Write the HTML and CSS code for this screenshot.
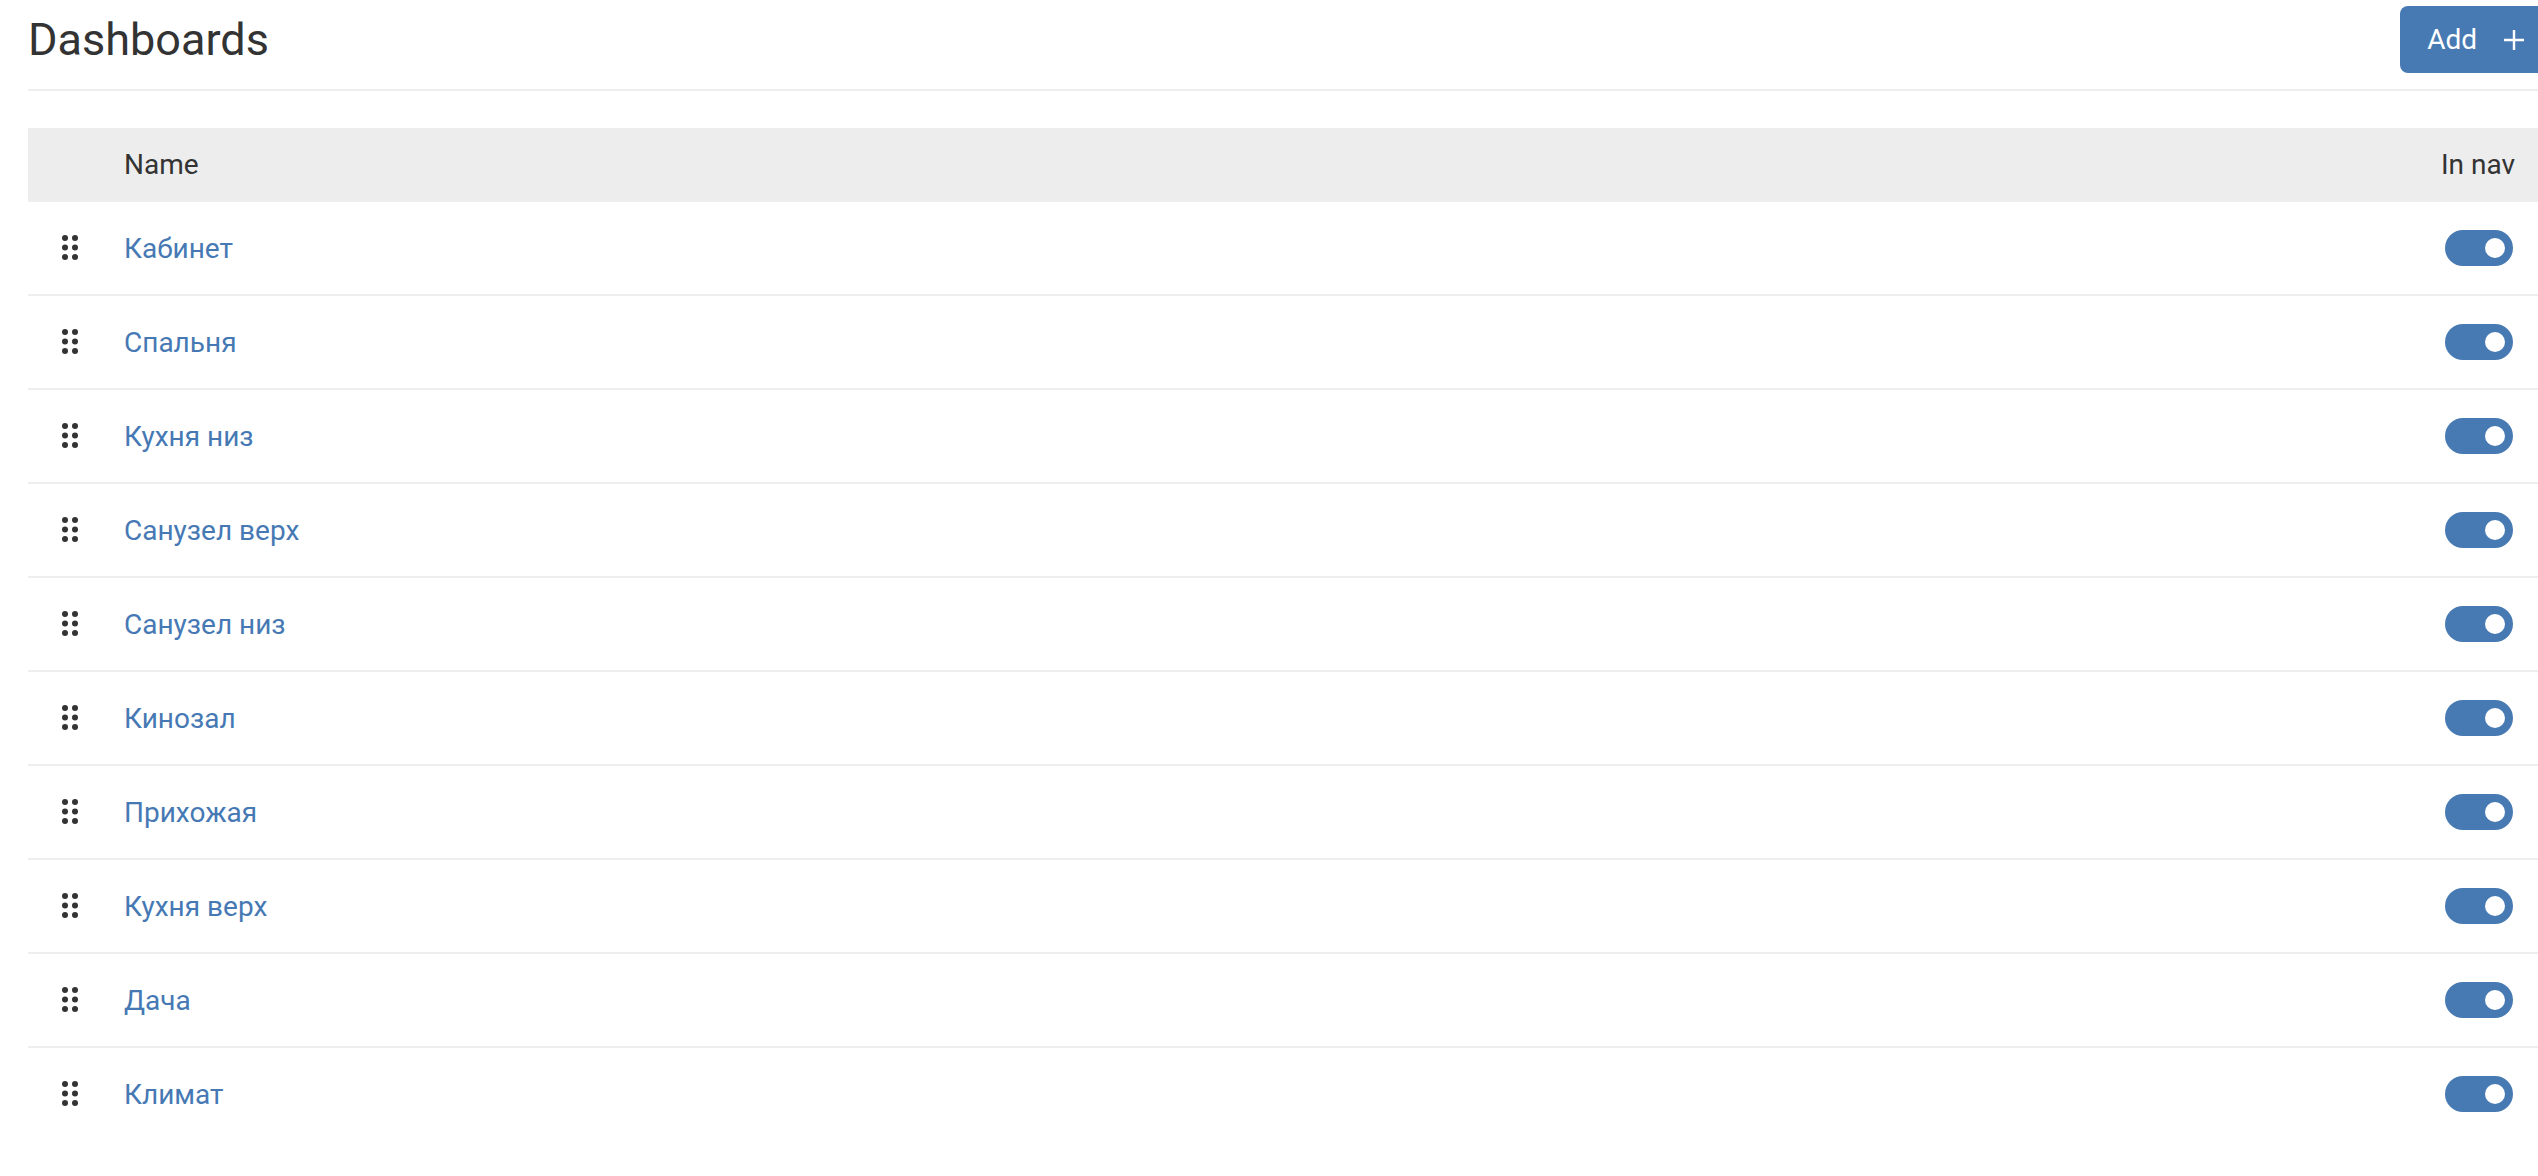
FILE: index.html
```html
<!DOCTYPE html>
<html lang="ru">
<head>
<meta charset="utf-8">
<title>Dashboards</title>
<link rel="stylesheet" href="styles.css">
</head>
<body>
<div class="page">
  <header class="top">
    <h1 class="title">Dashboards</h1>
    <button class="add-btn" type="button">
      <span>Add</span>
      <svg class="plus" width="20" height="20" viewBox="0 0 20 20"><path d="M10 0V20M0 10H20" stroke="#fff" stroke-width="2.4" fill="none"/></svg>
    </button>
  </header>

  <div class="table">
    <div class="row head">
      <div class="cell drag"></div>
      <div class="cell name">Name</div>
      <div class="cell nav">In nav</div>
    </div>

    <div class="row"><div class="cell drag"><svg class="grip" width="16" height="26" viewBox="0 0 16 26"><circle cx="3" cy="3" r="3"/><circle cx="13" cy="3" r="3"/><circle cx="3" cy="12.5" r="3"/><circle cx="13" cy="12.5" r="3"/><circle cx="3" cy="22" r="3"/><circle cx="13" cy="22" r="3"/></svg></div><div class="cell name"><a href="#">Кабинет</a></div><div class="cell nav"><span class="toggle"><span class="knob"></span></span></div></div>
    <div class="row"><div class="cell drag"><svg class="grip" width="16" height="26" viewBox="0 0 16 26"><circle cx="3" cy="3" r="3"/><circle cx="13" cy="3" r="3"/><circle cx="3" cy="12.5" r="3"/><circle cx="13" cy="12.5" r="3"/><circle cx="3" cy="22" r="3"/><circle cx="13" cy="22" r="3"/></svg></div><div class="cell name"><a href="#">Спальня</a></div><div class="cell nav"><span class="toggle"><span class="knob"></span></span></div></div>
    <div class="row"><div class="cell drag"><svg class="grip" width="16" height="26" viewBox="0 0 16 26"><circle cx="3" cy="3" r="3"/><circle cx="13" cy="3" r="3"/><circle cx="3" cy="12.5" r="3"/><circle cx="13" cy="12.5" r="3"/><circle cx="3" cy="22" r="3"/><circle cx="13" cy="22" r="3"/></svg></div><div class="cell name"><a href="#">Кухня низ</a></div><div class="cell nav"><span class="toggle"><span class="knob"></span></span></div></div>
    <div class="row"><div class="cell drag"><svg class="grip" width="16" height="26" viewBox="0 0 16 26"><circle cx="3" cy="3" r="3"/><circle cx="13" cy="3" r="3"/><circle cx="3" cy="12.5" r="3"/><circle cx="13" cy="12.5" r="3"/><circle cx="3" cy="22" r="3"/><circle cx="13" cy="22" r="3"/></svg></div><div class="cell name"><a href="#">Санузел верх</a></div><div class="cell nav"><span class="toggle"><span class="knob"></span></span></div></div>
    <div class="row"><div class="cell drag"><svg class="grip" width="16" height="26" viewBox="0 0 16 26"><circle cx="3" cy="3" r="3"/><circle cx="13" cy="3" r="3"/><circle cx="3" cy="12.5" r="3"/><circle cx="13" cy="12.5" r="3"/><circle cx="3" cy="22" r="3"/><circle cx="13" cy="22" r="3"/></svg></div><div class="cell name"><a href="#">Санузел низ</a></div><div class="cell nav"><span class="toggle"><span class="knob"></span></span></div></div>
    <div class="row"><div class="cell drag"><svg class="grip" width="16" height="26" viewBox="0 0 16 26"><circle cx="3" cy="3" r="3"/><circle cx="13" cy="3" r="3"/><circle cx="3" cy="12.5" r="3"/><circle cx="13" cy="12.5" r="3"/><circle cx="3" cy="22" r="3"/><circle cx="13" cy="22" r="3"/></svg></div><div class="cell name"><a href="#">Кинозал</a></div><div class="cell nav"><span class="toggle"><span class="knob"></span></span></div></div>
    <div class="row"><div class="cell drag"><svg class="grip" width="16" height="26" viewBox="0 0 16 26"><circle cx="3" cy="3" r="3"/><circle cx="13" cy="3" r="3"/><circle cx="3" cy="12.5" r="3"/><circle cx="13" cy="12.5" r="3"/><circle cx="3" cy="22" r="3"/><circle cx="13" cy="22" r="3"/></svg></div><div class="cell name"><a href="#">Прихожая</a></div><div class="cell nav"><span class="toggle"><span class="knob"></span></span></div></div>
    <div class="row"><div class="cell drag"><svg class="grip" width="16" height="26" viewBox="0 0 16 26"><circle cx="3" cy="3" r="3"/><circle cx="13" cy="3" r="3"/><circle cx="3" cy="12.5" r="3"/><circle cx="13" cy="12.5" r="3"/><circle cx="3" cy="22" r="3"/><circle cx="13" cy="22" r="3"/></svg></div><div class="cell name"><a href="#">Кухня верх</a></div><div class="cell nav"><span class="toggle"><span class="knob"></span></span></div></div>
    <div class="row"><div class="cell drag"><svg class="grip" width="16" height="26" viewBox="0 0 16 26"><circle cx="3" cy="3" r="3"/><circle cx="13" cy="3" r="3"/><circle cx="3" cy="12.5" r="3"/><circle cx="13" cy="12.5" r="3"/><circle cx="3" cy="22" r="3"/><circle cx="13" cy="22" r="3"/></svg></div><div class="cell name"><a href="#">Дача</a></div><div class="cell nav"><span class="toggle"><span class="knob"></span></span></div></div>
    <div class="row"><div class="cell drag"><svg class="grip" width="16" height="26" viewBox="0 0 16 26"><circle cx="3" cy="3" r="3"/><circle cx="13" cy="3" r="3"/><circle cx="3" cy="12.5" r="3"/><circle cx="13" cy="12.5" r="3"/><circle cx="3" cy="22" r="3"/><circle cx="13" cy="22" r="3"/></svg></div><div class="cell name"><a href="#">Климат</a></div><div class="cell nav"><span class="toggle"><span class="knob"></span></span></div></div>
  </div>
</div>
</body>
</html>
```

FILE: styles.css
```css
html {
  overflow: hidden;
}
body {
  margin: 0;
  background: #fff;
  font-family: Roboto, "Noto Sans", sans-serif;
  color: #333;
}
.page {
  width: 2523px;
  padding-left: 28px;
}
.top {
  display: flex;
  justify-content: space-between;
  align-items: center;
  padding-top: 6px;
  padding-bottom: 16px;
  border-bottom: 2px solid #eeeeee;
}
.title {
  margin: 0;
  font-size: 45px;
  font-weight: 400;
  line-height: 1;
  color: #333;
}
.add-btn {
  display: flex;
  align-items: center;
  gap: 27px;
  height: 67px;
  padding: 0 27px;
  border: 0;
  border-radius: 8px;
  background: #477ab3;
  color: #fff;
  font-family: Roboto, sans-serif;
  font-size: 28px;
  line-height: 1;
}
.plus {
  display: block;
}
.table {
  margin-top: 37px;
}
.row {
  display: grid;
  grid-template-columns: 96px 1fr auto;
  align-items: center;
  height: 92px;
  border-top: 2px solid #eeeeee;
  font-size: 28px;
}
.row.head {
  height: 72px;
  border-top: 0;
  background: #ededed;
  color: #333;
}
.cell.drag {
  padding-left: 34px;
  display: flex;
  align-items: center;
}
.grip {
  display: block;
  fill: #333;
}
.cell.name a {
  color: #4679b4;
  text-decoration: none;
}
.cell.nav {
  padding-right: 36px;
  display: flex;
  justify-content: flex-end;
}
.toggle {
  display: flex;
  align-items: center;
  justify-content: flex-end;
  width: 68px;
  height: 36px;
  margin-right: 2px;
  padding-right: 8px;
  box-sizing: border-box;
  border-radius: 18px;
  background: #477ab3;
}
.knob {
  width: 20px;
  height: 20px;
  border-radius: 50%;
  background: #fff;
}
```
